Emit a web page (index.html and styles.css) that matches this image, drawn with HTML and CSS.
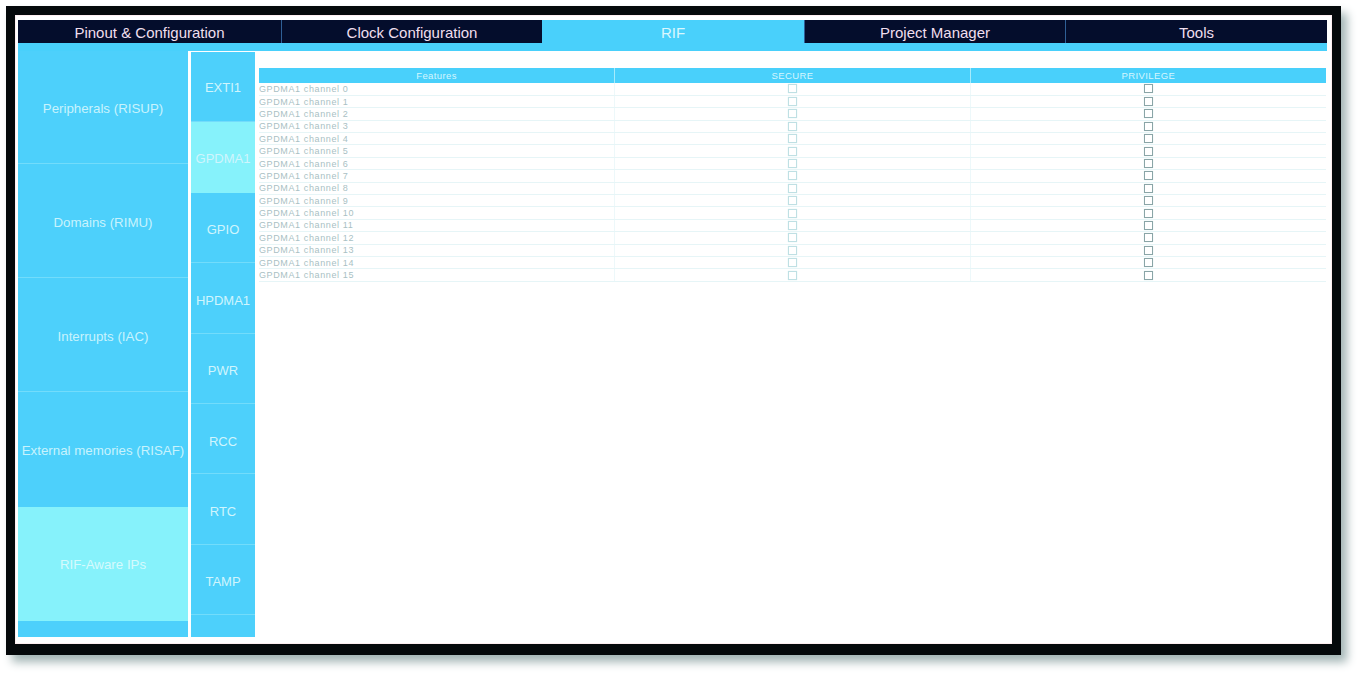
FILE: index.html
```html
<!DOCTYPE html>
<html lang="en">
	<head>
		<meta charset="UTF-8">
		<meta name="viewport" content="width=device-width, initial-scale=1.0">
		<title>RIF</title>
		<link rel="stylesheet" href="styles.css">
	</head>

	<body>
		<div class="frame">
			<div class="window">
				<nav class="tabs">
					<div class="tab">Pinout &amp; Configuration</div>
					<div class="tab">Clock Configuration</div>
					<div class="tab active">RIF</div>
					<div class="tab">Project Manager</div>
					<div class="tab">Tools</div>
				</nav>
				<div class="tabs-underline"></div>

				<main class="content">
					<aside class="side-list">
						<div class="side-item">Peripherals (RISUP)</div>
						<div class="side-item">Domains (RIMU)</div>
						<div class="side-item">Interrupts (IAC)</div>
						<div class="side-item">External memories (RISAF)</div>
						<div class="side-item selected">RIF-Aware IPs</div>
					</aside>

					<aside class="ip-list">
						<div class="ip-item">EXTI1</div>
						<div class="ip-item selected">GPDMA1</div>
						<div class="ip-item">GPIO</div>
						<div class="ip-item">HPDMA1</div>
						<div class="ip-item">PWR</div>
						<div class="ip-item">RCC</div>
						<div class="ip-item">RTC</div>
						<div class="ip-item">TAMP</div>
					</aside>

					<section class="panel">
						<table>
							<thead>
								<tr>
									<th>Features</th>
									<th>SECURE</th>
									<th>PRIVILEGE</th>
								</tr>
							</thead>
							<tbody>
								<tr><td>GPDMA1 channel 0</td><td><span class="check"></span></td><td><span class="check dark"></span></td></tr>
								<tr><td>GPDMA1 channel 1</td><td><span class="check"></span></td><td><span class="check dark"></span></td></tr>
								<tr><td>GPDMA1 channel 2</td><td><span class="check"></span></td><td><span class="check dark"></span></td></tr>
								<tr><td>GPDMA1 channel 3</td><td><span class="check"></span></td><td><span class="check dark"></span></td></tr>
								<tr><td>GPDMA1 channel 4</td><td><span class="check"></span></td><td><span class="check dark"></span></td></tr>
								<tr><td>GPDMA1 channel 5</td><td><span class="check"></span></td><td><span class="check dark"></span></td></tr>
								<tr><td>GPDMA1 channel 6</td><td><span class="check"></span></td><td><span class="check dark"></span></td></tr>
								<tr><td>GPDMA1 channel 7</td><td><span class="check"></span></td><td><span class="check dark"></span></td></tr>
								<tr><td>GPDMA1 channel 8</td><td><span class="check"></span></td><td><span class="check dark"></span></td></tr>
								<tr><td>GPDMA1 channel 9</td><td><span class="check"></span></td><td><span class="check dark"></span></td></tr>
								<tr><td>GPDMA1 channel 10</td><td><span class="check"></span></td><td><span class="check dark"></span></td></tr>
								<tr><td>GPDMA1 channel 11</td><td><span class="check"></span></td><td><span class="check dark"></span></td></tr>
								<tr><td>GPDMA1 channel 12</td><td><span class="check"></span></td><td><span class="check dark"></span></td></tr>
								<tr><td>GPDMA1 channel 13</td><td><span class="check"></span></td><td><span class="check dark"></span></td></tr>
								<tr><td>GPDMA1 channel 14</td><td><span class="check"></span></td><td><span class="check dark"></span></td></tr>
								<tr><td>GPDMA1 channel 15</td><td><span class="check"></span></td><td><span class="check dark"></span></td></tr>
							</tbody>
						</table>
					</section>
				</main>
			</div>
		</div>
	</body>
</html>
```

FILE: styles.css
```css
html, body {
	margin: 0;
	padding: 0;
	background-color: #fff;
	overflow: hidden;
}

body {
	font-family: "Liberation Sans", Arial, sans-serif;
	height: 674px;
}

.frame {
	box-sizing: border-box;
	width: 1335px;
	height: 649px;
	margin: 6px 0 0 6px;
	border: 9px solid #05090b;
	border-bottom-width: 11px;
	box-shadow: 6px 7px 9px #a3b5b5;
}

.window {
	box-sizing: border-box;
	height: 100%;
	padding: 5px 5px 7px 3px;
	background-color: #fff;
	box-shadow: inset 0 0 0 1px #fdeef0;
	display: flex;
	flex-direction: column;
}

.tabs {
	display: grid;
	grid-template-columns: 263px 261px 262px 261px 1fr;
	height: 23px;
	flex: none;
}

.tab {
	display: flex;
	align-items: center;
	justify-content: center;
	padding-top: 1px;
	box-sizing: border-box;
	background-color: #040d2c;
	border-left: 1px solid #2f5f96;
	color: #f0dfee;
	font-size: 15px;
}

.tab:first-child {
	border-left: 0;
}

.tab.active {
	background-color: #49d0fb;
	border-left: 0;
	color: #d9f7fe;
}

.tabs-underline {
	height: 8px;
	flex: none;
	background-color: #49d0fb;
}

.content {
	flex: 1;
	min-height: 0;
	display: flex;
}

.side-list {
	width: 170px;
	flex: none;
	background-color: #4dd0fb;
	display: flex;
	flex-direction: column;
	box-sizing: border-box;
}

.side-item {
	box-sizing: border-box;
	height: 114px;
	flex: none;
	display: flex;
	align-items: center;
	justify-content: center;
	padding-top: 3px;
	color: #c8f3fd;
	font-size: 13.3px;
	white-space: nowrap;
	border-bottom: 1px solid #72dcfb;
}

.side-item:first-child {
	height: 113px;
}

.side-item:nth-child(4) {
	height: 115px;
	padding-top: 2px;
	border-bottom: 0;
}

.side-item.selected {
	padding-top: 0;
	background-color: #86f2fb;
	color: #d6fafd;
	border-bottom: 0;
}

.ip-list {
	box-sizing: border-box;
	width: 64px;
	flex: none;
	margin: 1px 0 0 3px;
	background-color: #4dd0fb;
}

.ip-item {
	box-sizing: border-box;
	height: 70.4px;
	display: flex;
	align-items: center;
	justify-content: center;
	padding-top: 1px;
	color: #d0f5fd;
	font-size: 13px;
	border-bottom: 1px solid #72dcfb;
}

.ip-item + .ip-item {
	padding-top: 5px;
}

.ip-item.selected {
	padding-top: 1px;
	background-color: #86f2fb;
	border-bottom: 0;
}

.panel {
	flex: 1;
	min-width: 0;
	padding: 17px 1px 0 4px;
}

table {
	width: 100%;
	table-layout: fixed;
	border-collapse: collapse;
}

th {
	height: 15px;
	padding: 0;
	background-color: #49d0fb;
	border-left: 1px solid #a5ebfc;
	color: #d4f6fe;
	font-size: 9.5px;
	font-weight: normal;
	letter-spacing: 0.4px;
}

th:first-child {
	border-left: 0;
}

td {
	height: 12.4px;
	padding: 0 1px;
	box-sizing: border-box;
	border-bottom: 1px solid #e6f5f7;
	border-left: 1px solid #edf8fa;
	color: #a9bfc4;
	font-size: 9px;
	line-height: 10px;
	letter-spacing: 0.62px;
	text-align: center;
	overflow: hidden;
	white-space: nowrap;
}

td:first-child {
	padding-left: 0;
	border-left: 0;
	text-align: left;
}

.check {
	display: block;
	box-sizing: border-box;
	width: 9px;
	height: 9px;
	margin: 0 auto;
	border: 1px solid #bfe0e4;
	box-shadow: 0 0 1px #cfe9ec;
}

.check.dark {
	border-color: #8aa5a7;
}
```
